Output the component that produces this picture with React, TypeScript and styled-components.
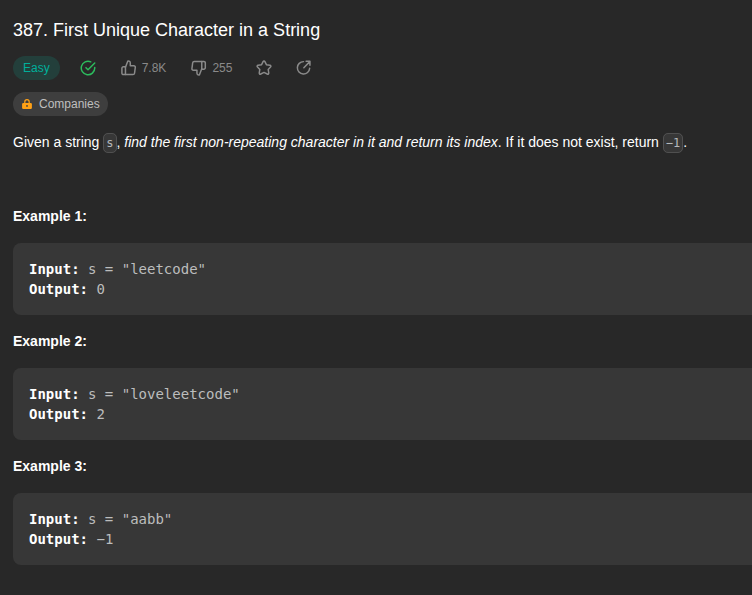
import React from 'react';
import styled, { createGlobalStyle } from 'styled-components';

const GlobalStyle = createGlobalStyle`
  body {
    margin: 0;
    background: #282828;
    overflow: hidden;
  }
`;

const Page = styled.main`
  box-sizing: border-box;
  width: 100%;
  height: 595px;
  overflow: hidden;
  padding: 16px 0 0 13px;
  background: #282828;
  color: #fff;
  font: 14px/20px "Liberation Sans", Arial, sans-serif;
`;

const Title = styled.h1`
  margin: 0;
  font-size: 18px;
  line-height: 28px;
  font-weight: 400;
`;

const Toolbar = styled.div`
  display: flex;
  align-items: center;
  height: 24px;
  margin-top: 12px;
`;

const Difficulty = styled.span`
  padding: 0 10px;
  margin-right: 19px;
  border-radius: 12px;
  background: #233f3b;
  color: #00af9b;
  font-size: 12px;
  line-height: 24px;
`;

const Stat = styled.span<{ $gap?: number; $color?: string }>`
  display: flex;
  align-items: center;
  gap: 4px;
  margin-right: ${(p) => p.$gap ?? 22}px;
  color: ${(p) => p.$color ?? '#8a8a8a'};
  font-size: 12px;
  line-height: 16px;
`;

const Icon = styled.svg`
  display: block;
  width: 18px;
  height: 18px;
  flex: none;
`;

const LockIcon = styled.svg`
  display: block;
  width: 14px;
  height: 14px;
`;

const CompanyTag = styled.div`
  display: flex;
  align-items: center;
  gap: 5px;
  box-sizing: border-box;
  width: max-content;
  height: 24px;
  margin-top: 12px;
  padding: 0 8px 0 7px;
  border-radius: 12px;
  background: #3e3e3e;
  color: #bfbfbf;
  font-size: 12px;
`;

const Statement = styled.p`
  margin: 16px 0 0;
  white-space: nowrap;
`;

const Code = styled.code`
  padding: 2px;
  border: 1px solid #505050;
  border-radius: 5px;
  background: #373737;
  color: #b5b8bb;
  font: 12px "DejaVu Sans Mono", monospace;
`;

const Examples = styled.div`
  margin-top: 54px;
`;

const ExampleTitle = styled.p`
  margin: 0;
  font-weight: 700;
`;

const Sample = styled.pre`
  margin: 17px 0 16px;
  padding: 16px;
  border-radius: 8px 0 0 8px;
  background: #373737;
  color: #bcbdbd;
  font: 14px/20px "DejaVu Sans Mono", monospace;

  strong {
    color: #fff;
  }
`;

const examples = [
  { input: 's = "leetcode"', output: '0' },
  { input: 's = "loveleetcode"', output: '2' },
  { input: 's = "aabb"', output: '\u22121' },
];

const outline = {
  viewBox: '-0.7 -0.7 25.4 25.4',
  fill: 'none',
  stroke: 'currentColor',
  strokeWidth: 2.1,
  strokeLinecap: 'round' as const,
  strokeLinejoin: 'round' as const,
};

const thumbPaths = (
  <>
    <path d="M2 12.4a2 2 0 0 1 2-2H7V21.3H4a2 2 0 0 1-2-2z" />
    <path d="M7 10.8 10.4 2.2h.8a2.6 2.6 0 0 1 2.6 2.6v4h5a2.1 2.1 0 0 1 2.1 2.4l-1.1 8.2a2.2 2.2 0 0 1-2.2 1.9H7" />
  </>
);

export default function App() {
  return (
    <>
      <GlobalStyle />
      <Page>
        <Title>387. First Unique Character in a String</Title>
        <Toolbar>
          <Difficulty>Easy</Difficulty>
          <Stat $gap={23} $color="#2cbb5d">
            <Icon viewBox="0 0 24 24" fill="currentColor">
              <path d="M20 12.005v-.828a1 1 0 1 1 2 0v.829a10 10 0 1 1-5.93-9.14 1 1 0 0 1-.814 1.826A8 8 0 1 0 20 12.005z" />
              <path d="M8.593 10.852a1 1 0 0 1 1.414 0L12 12.844l8.293-8.3a1 1 0 0 1 1.415 1.413l-9 9.009a1 1 0 0 1-1.415 0l-2.7-2.7a1 1 0 0 1 0-1.414z" />
            </Icon>
          </Stat>
          <Stat $gap={24}>
            <Icon {...outline}>{thumbPaths}</Icon>
            7.8K
          </Stat>
          <Stat $gap={23}>
            <Icon {...outline} viewBox="0.4 -0.7 25.4 25.4">
              <g transform="rotate(180 12 12)">{thumbPaths}</g>
            </Icon>
            255
          </Stat>
          <Stat>
            <Icon {...outline} viewBox="-0.7 -0.4 25.4 25.4">
              <path d="M12 2.5c.6 0 1 .3 1.3.9l2.1 4.2 4.9.8c1.4.2 1.9 1.5.9 2.5l-3.3 3.4.8 5c.2 1.4-.9 2.1-2.1 1.5L12 18.5l-4.6 2.3c-1.2.6-2.3-.1-2.1-1.5l.8-5-3.3-3.4c-1-1-.5-2.3.9-2.5l4.9-.8 2.1-4.2c.3-.6.7-.9 1.3-.9z" />
            </Icon>
          </Stat>
          <Stat $gap={0}>
            <Icon {...outline} viewBox="-0.5 -0.2 25.4 25.4">
              <path d="M11.5 3.5A8.7 8.7 0 1 0 20.2 13" />
              <path d="M12 12 20.3 3.5M15.2 3.1h5.4v5.4" />
            </Icon>
          </Stat>
        </Toolbar>
        <CompanyTag>
          <LockIcon viewBox="0 0 14 14">
            <path d="M4.8 6.5V4.9a2.2 2.2 0 0 1 4.4 0v1.6" fill="none" stroke="#ffa116" strokeWidth="1.2" />
            <rect x="2.1" y="6" width="9.8" height="6" rx="1.2" fill="#ffa116" />
            <circle cx="7" cy="8.9" r="0.9" fill="#3e3e3e" />
          </LockIcon>
          Companies
        </CompanyTag>
        <Statement>
          Given a string <Code>s</Code>,{' '}
          <em>find the first non-repeating character in it and return its index</em>. If it does
          not exist, return <Code>{'\u22121'}</Code>.
        </Statement>
        <Examples>
          {examples.map((example, index) => (
            <React.Fragment key={example.input}>
              <ExampleTitle>Example {index + 1}:</ExampleTitle>
              <Sample>
                <strong>Input:</strong> {example.input}
                {'\n'}
                <strong>Output:</strong> {example.output}
              </Sample>
            </React.Fragment>
          ))}
        </Examples>
      </Page>
    </>
  );
}
